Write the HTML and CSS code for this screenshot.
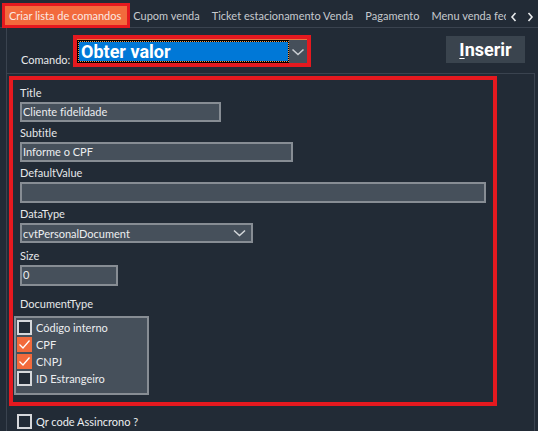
FILE: index.html
```html
<!DOCTYPE html>
<html>
<head>
<meta charset="utf-8">
<link rel="stylesheet" href="styles.css">
</head>
<body>
<div class="tabbar">
  <div class="tabs">
    <div class="tab active"><span class="tab-inner">Criar lista de comandos</span></div>
    <div class="tab first">Cupom venda</div>
    <div class="tab">Ticket estacionamento Venda</div>
    <div class="tab">Pagamento</div>
    <div class="tab">Menu venda fechada</div>
  </div>
  <div class="arrows">
    <svg width="8" height="10" viewBox="0 0 8 10"><path d="M5.5 1 L2 5 L5.5 9" fill="none" stroke="#e8eaec" stroke-width="1.6"/></svg>
    <svg width="8" height="10" viewBox="0 0 8 10"><path d="M2.5 1 L6 5 L2.5 9" fill="none" stroke="#e8eaec" stroke-width="1.6"/></svg>
  </div>
</div>
<div class="content">
  <div class="cmd-row">
    <span class="cmd-label">Comando:</span>
    <div class="cmd-select">
      <div class="cmd-inner">
        <div class="cmd-focus"><div class="cmd-value">Obter valor</div></div>
        <div class="cmd-btn"><svg width="14" height="8" viewBox="0 0 14 8"><path d="M1.5 1.5 L7 6.5 L12.5 1.5" fill="none" stroke="#c9cdd2" stroke-width="1.6"/></svg></div>
      </div>
    </div>
    <button class="insert"><u>I</u>nserir</button>
  </div>
  <div class="group">
    <div class="props">
      <div class="field">
        <div class="label">Title</div>
        <div class="input w-title">Cliente fidelidade</div>
      </div>
      <div class="field">
        <div class="label">Subtitle</div>
        <div class="input w-sub">Informe o CPF</div>
      </div>
      <div class="field f-default">
        <div class="label">DefaultValue</div>
        <div class="input w-def tall"></div>
      </div>
      <div class="field f-type">
        <div class="label">DataType</div>
        <div class="input w-type select">
          <span>cvtPersonalDocument</span>
          <svg width="13" height="8" viewBox="0 0 13 8"><path d="M1 1.5 L6.5 6.5 L12 1.5" fill="none" stroke="#d4d7da" stroke-width="1.5"/></svg>
        </div>
      </div>
      <div class="field f-size">
        <div class="label">Size</div>
        <div class="input w-size tall">0</div>
      </div>
      <div class="label">DocumentType</div>
      <div class="doclist">
        <div class="check-row"><span class="cb"></span>Código interno</div>
        <div class="check-row"><span class="cb on"><svg width="15" height="15" viewBox="0 0 15 15"><path d="M2.5 7.5 L6 11 L12.5 3.5" fill="none" stroke="#ffffff" stroke-width="1.3"/></svg></span>CPF</div>
        <div class="check-row"><span class="cb on"><svg width="15" height="15" viewBox="0 0 15 15"><path d="M2.5 7.5 L6 11 L12.5 3.5" fill="none" stroke="#ffffff" stroke-width="1.3"/></svg></span>CNPJ</div>
        <div class="check-row"><span class="cb"></span>ID Estrangeiro</div>
      </div>
    </div>
    <div class="check-row qr"><span class="cb"></span>Qr code Assincrono ?</div>
  </div>
</div>
</body>
</html>
```
FILE: styles.css
```css
html, body {
  margin: 0;
  padding: 0;
}
body {
  width: 538px;
  height: 431px;
  overflow: hidden;
  background: #222b36;
  font-family: Lato, "Noto Sans", sans-serif;
  font-size: 11px;
  color: #e6e8ea;
  font-variant-ligatures: none;
}
.tabbar {
  height: 28px;
  display: flex;
  box-shadow: inset 0 -1px 0 #3a434f;
}
.tabs {
  display: flex;
  width: 506px;
  overflow: hidden;
  white-space: nowrap;
  padding-left: 2px;
  padding-top: 3px;
  box-sizing: border-box;
  align-items: flex-start;
}
.tab {
  flex: none;
  border: 3px solid transparent;
  height: 19px;
  line-height: 19px;
  padding: 0 3px;
  color: #c6cace;
}
.tab.first {
  padding-left: 0;
}
.tab.active {
  border-color: #e5191f;
  padding: 0;
  position: relative;
  z-index: 1;
}
.tab-inner {
  display: block;
  background: #f26a3c;
  color: #fbe9e2;
  padding: 0 6px 0 4px;
  height: 19px;
}
.arrows {
  display: flex;
  gap: 8px;
  padding-top: 12px;
  padding-left: 4px;
}
.content {
  margin-left: 6px;
  border-left: 1px solid #3a434f;
  height: 403px;
}
.cmd-row {
  height: 45px;
  display: flex;
  align-items: flex-start;
}
.cmd-label {
  flex: none;
  white-space: nowrap;
  width: 52px;
  margin-left: 14px;
  margin-top: 24px;
  line-height: 16px;
  color: #e8eaec;
}
.cmd-select {
  flex: none;
  margin-top: 7px;
  width: 230px;
  height: 24px;
  border: 4px solid #e5191f;
}
.cmd-inner {
  display: flex;
  height: 24px;
  border-top: 1px solid #e8773f;
  box-sizing: border-box;
}
.cmd-focus {
  flex: 1;
  background: #000;
  padding: 1px 0 1px 1px;
  display: flex;
}
.cmd-value {
  flex: 1;
  background: #0078d7;
  background-clip: padding-box;
  border: 1px dotted #f09a4a;
  color: #ffffff;
  font-family: Roboto, "Noto Sans", sans-serif;
  font-weight: 700;
  font-size: 18px;
  line-height: 20px;
  padding-left: 2px;
}
.cmd-btn {
  width: 18px;
  background: #454f5a;
  display: flex;
  align-items: center;
  justify-content: center;
}
.insert {
  flex: none;
  margin-left: auto;
  margin-right: 13px;
  margin-top: 8px;
  width: 79px;
  height: 27px;
  border: 0;
  background: #3a444e;
  color: #ffffff;
  font-family: Roboto, "Noto Sans", sans-serif;
  font-weight: 700;
  font-size: 18px;
  padding: 0;
  line-height: 27px;
}
.insert u {
  text-decoration-thickness: 1px;
  text-underline-offset: 2px;
}
.group {
  width: 527px;
  height: 357px;
  border-top: 1px solid #3a434f;
  border-right: 1px solid #3a434f;
}
.props {
  margin: 2px 0 0 2px;
  width: 480px;
  border: 4px solid #e5191f;
  padding-top: 3px;
  height: 319px;
}
.field {
  padding-left: 7px;
  margin-bottom: 1px;
}
.f-type {
  margin-bottom: 3px;
}
.f-size {
  margin-bottom: 8px;
}
.label {
  height: 19px;
  line-height: 20px;
  padding-left: 7px;
}
.field .label {
  padding-left: 0;
}
.input {
  box-sizing: border-box;
  height: 20px;
  border: 2px solid #878d94;
  background: #46505b;
  line-height: 15px;
  padding-left: 1px;
  color: #eceef0;
}
.input.tall {
  height: 21px;
}
.w-title { width: 201px; }
.w-sub { width: 273px; }
.w-def { width: 466px; }
.w-type { width: 233px; }
.w-size { width: 98px; }
.select {
  display: flex;
  align-items: center;
  justify-content: space-between;
  padding-right: 5px;
}
.doclist {
  margin-top: 3px;
  margin-left: 1px;
  width: 135px;
  height: 79px;
  box-sizing: border-box;
  border: 2px solid #878d94;
  background: #46505b;
  padding: 1px 0 0 1px;
}
.check-row {
  display: flex;
  align-items: center;
  height: 17px;
  line-height: 17px;
  color: #eceef0;
}
.cb {
  flex: none;
  width: 15px;
  height: 15px;
  box-sizing: border-box;
  border: 2px solid #d6d8db;
  background: #222b36;
  margin-right: 4px;
}
.cb.on {
  border: 0;
  background: #f26a3c;
}
.cb svg {
  display: block;
}
.qr {
  margin-left: 10px;
  margin-top: 7px;
}
```
